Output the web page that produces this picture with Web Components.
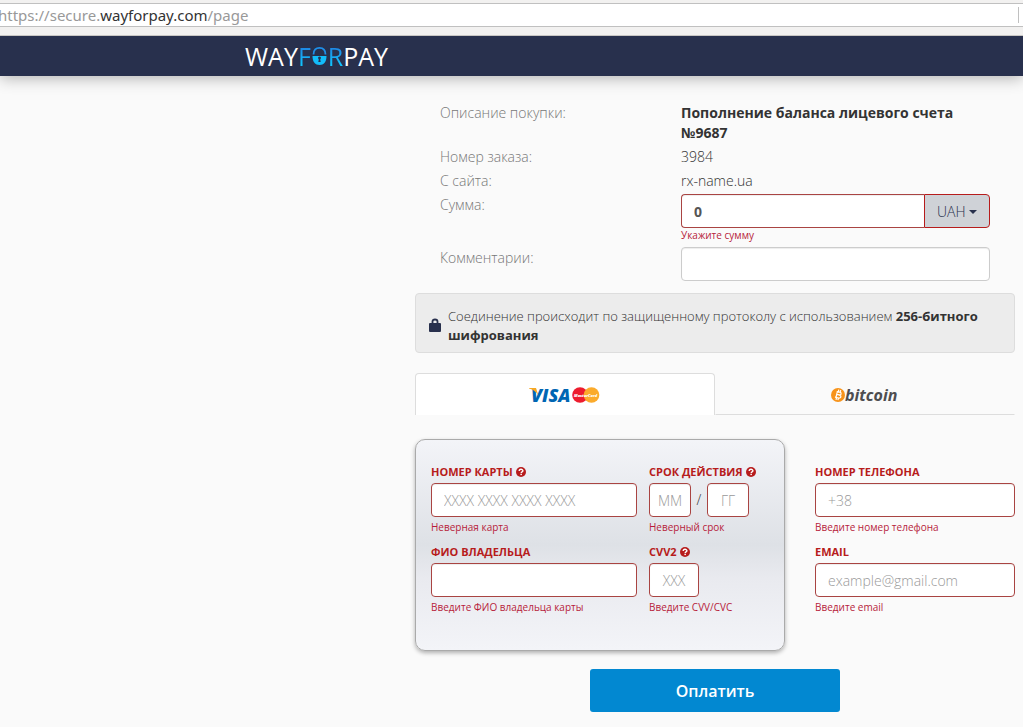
<!DOCTYPE html>
<html lang="ru">
<head>
<meta charset="utf-8">
<title>WayForPay</title>
<style>
  body {
    margin: 0;
    background: #fafafa;
    color: #333;
    font: 300 14px/20px "Open Sans", "Noto Sans", sans-serif;
  }
</style>
</head>
<body>
<pay-page></pay-page>

<script>
const define = (name, html, setup) => {
  const template = document.createElement('template');
  template.innerHTML = '<style>*, *::before { box-sizing: border-box; }</style>' + html;
  customElements.define(name, class extends HTMLElement {
    connectedCallback() {
      if (this.shadowRoot) return;
      const root = this.attachShadow({ mode: 'open' });
      root.append(template.content.cloneNode(true));
      if (setup) setup(this, root);
    }
  });
};

const inputCss = `
  input {
    display: block; width: 100%; height: 34px; margin: 0; padding: 6px 12px;
    border: 1px solid var(--line, #a94442); border-radius: 4px; background: #fff;
    font: inherit; font-size: 14px; line-height: 20px; color: #555; outline: none;
    box-shadow: inset 0 1px 1px rgba(0, 0, 0, .075);
  }
  input::placeholder { color: #999; opacity: 1; }`;

const errorCss = `.error { display: block; font-size: 10px; font-weight: 400; color: #b71c3a; }`;

/* Browser address line, scrolled a little to the left */
define('address-bar', `
  <style>
    :host { display: block; position: relative; z-index: 1; padding: 3px 0 8px; background: #f2f1f0; border-bottom: 1px solid #c9c7c4; }
    .line {
      display: flex; align-items: center; height: 24px; overflow: hidden; white-space: pre;
      border: solid #c0c0c0; border-width: 1px 0; background: #fff;
      font: 400 15px/22px "Noto Sans", sans-serif; color: #999;
    }
    span { margin-left: -2px; }
    b { font-weight: 400; color: #333; }
    i { margin: 0 4px 0 auto; width: 1px; height: 16px; background: #c0c0c0; }
  </style>
  <div class="line"><span>https://secure.<b>wayforpay.com</b>/page</span><i></i></div>`);

/* Dark header with the logo */
define('site-header', `
  <style>
    :host {
      display: flex; align-items: center; height: 40px; padding-left: 245px;
      background: #28304d; box-shadow: 0 2px 16px rgba(0, 0, 0, .3);
    }
    a { display: flex; align-items: center; font-size: 25px; font-weight: 400; line-height: 40px; color: #fff; text-decoration: none; }
    .for { background: linear-gradient(#1e88e5 12px, #10c8ff 30px); -webkit-background-clip: text; background-clip: text; color: transparent; }
    svg { display: block; margin: 0 1px; }
  </style>
  <a href="#" aria-label="WayForPay">
    <span>WAY</span><span class="for">F</span>
    <svg width="15" height="20" viewBox="0 0 15 20" aria-hidden="true">
      <path d="M1.500 8.500C1.500 4 4 1.800 7.500 1.800S13.500 4 13.500 8.500" fill="none" stroke="#1e90ea" stroke-width="1.800"/>
      <path d="M.5 10h14c0 6-2.700 9-7 9S.5 16 .5 10z" fill="#12bcfa"/>
      <path d="M6 12a1.500 1.500 0 1 1 3 0l-.8 1.500.5 2.500H6.300l.5-2.500z" fill="#28304d"/>
    </svg>
    <span class="for">R</span><span>PAY</span>
  </a>`);

/* One line of the order: name on the left, slotted value on the right */
define('order-row', `
  <style>
    :host { display: grid; grid-template-columns: 241px 1fr; }
    .name { padding-top: 1px; color: #777; }
    ::slotted(span), ::slotted(strong) { display: block; padding-top: 1px; }
  </style>
  <div class="name"></div><div><slot></slot></div>`,
  (host, root) => { root.querySelector('.name').textContent = host.getAttribute('name'); });

define('amount-field', `
  <style>
    :host { display: block; }
    ${inputCss} ${errorCss}
    .group { display: grid; grid-template-columns: 1fr 66px; }
    input { border-radius: 4px 0 0 4px; border-right: 0; font-weight: 700; }
    .unit { display: grid; align-items: center; }
    .unit > * { grid-area: 1 / 1; }
    select {
      appearance: none; width: 100%; height: 34px; margin: 0; padding: 1px 12px 0;
      border: 1px solid #b71c1c; border-radius: 0 4px 4px 0; background: #cfd2d7;
      font: inherit; color: #28304d;
    }
    svg { justify-self: end; margin: 2px 13px 0 0; pointer-events: none; }
    .error { padding-bottom: 2px; line-height: 14px; }
  </style>
  <div class="group">
    <input type="text" value="0" aria-label="Сумма">
    <div class="unit">
      <select aria-label="Валюта"><option>UAH</option></select>
      <svg width="8" height="4" viewBox="0 0 8 4" aria-hidden="true"><path d="M0 0h8L4 4z" fill="#28304d"/></svg>
    </div>
  </div>
  <span class="error">Укажите сумму</span>`);

define('comment-field', `
  <style>:host { display: block; --line: #ccc; } ${inputCss}</style>
  <input type="text" aria-label="Комментарии">`);

define('secure-note', `
  <style>
    :host {
      display: flex; align-items: center; gap: 7px; padding: 13px 13px 7px;
      border: 1px solid #ddd; border-radius: 4px; background: #ececec;
      font-size: 13px; line-height: 19px;
    }
    svg { flex: none; }
    p { margin: 0; }
  </style>
  <svg width="12" height="16" viewBox="0 0 12 16" aria-hidden="true">
    <path d="M3.500 6V3.500c0-1.300.8-2 2.500-2s2.500.7 2.500 2V6" fill="none" stroke="#28304d" stroke-width="1.800"/>
    <rect y="5" width="12" height="9" rx="1" fill="#28304d"/>
  </svg>
  <p><slot></slot></p>`);

define('pay-tabs', `
  <style>
    :host { display: grid; grid-template-columns: 1fr 1fr; }
    button {
      display: flex; align-items: center; justify-content: center; height: 42px; margin: 0; padding: 0;
      border: 1px solid transparent; border-bottom-color: #ddd; background: none; font: inherit;
    }
    .active { border-color: #ddd; border-bottom: 0; border-radius: 4px 4px 0 0; background: #fff; }
    svg { display: block; font-family: "Open Sans", sans-serif; }
  </style>
  <button type="button" class="active" aria-label="Visa, MasterCard">
    <svg width="72" height="26" viewBox="0 -3 72 26">
      <text x="2" y="17" font-size="18" font-weight="800" font-style="italic" fill="#0066b3">VISA</text>
      <path d="M0 3h7l2.500 8C8 7 4 4.500 0 3.500z" fill="#f7a823"/>
      <circle cx="51" cy="10" r="7.800" fill="#ed1c2e"/>
      <circle cx="62.500" cy="10" r="7.800" fill="#fbab2c"/>
      <text x="45" y="12" font-size="4" font-weight="800" font-style="italic" fill="#fff">MasterCard</text>
    </svg>
  </button>
  <button type="button" aria-label="bitcoin">
    <svg width="70" height="26" viewBox="0 -3 70 26">
      <circle cx="8" cy="11" r="7" fill="#f7931a"/>
      <path transform="translate(0 1)" d="M6.700 6.500l3 .7c2.200.5 1.700 3-.5 2.600l-2.200-.5M9 9.800c2.800.6 2.200 3.700-.4 3.200l-3.600-.8M7.300 6.700l-1.300 5.600M8.800 4.700l-.5 2M10.700 5.200l-.5 2M6.500 12.800l-.5 2M8.400 13.200l-.5 2" fill="none" stroke="#fff" stroke-width="1.200"/>
      <text x="15" y="17" font-size="16" font-weight="700" font-style="italic" fill="#4d4d4f">bitcoin</text>
    </svg>
  </button>`);

const helpIcon = `<svg class="help" width="10" height="10" viewBox="0 0 10 10" role="img" aria-label="Подсказка">
  <circle cx="5" cy="5" r="5" fill="#b71c1c"/>
  <path d="M3.200 4.100C3.200 2.900 4 2.300 5 2.300s1.900.6 1.900 1.500C6.900 5 5.200 4.900 5.200 6" fill="none" stroke="#fff" stroke-width="1.400"/>
  <rect x="4.400" y="6.700" width="1.500" height="1.400" fill="#fff"/></svg>`;

/* Captioned input with its error text; "second" adds a second box after a slash */
define('card-field', `
  <style>
    :host { display: block; }
    ${inputCss} ${errorCss}
    label { display: flex; align-items: center; gap: 3px; height: 16px; margin-bottom: 3px; font-size: 11px; font-weight: 700; line-height: 16px; color: #b71c1c; white-space: nowrap; }
    .boxes { display: flex; align-items: center; }
    .slash { width: 16px; text-align: center; }
    :host([box]) input { flex: none; width: var(--box); padding: 6px 0; text-align: center; }
    .error { line-height: 20px; white-space: nowrap; }
  </style>
  <label for="box"></label>
  <div class="boxes"><input id="box"></div>
  <span class="error"></span>`,
  (host, root) => {
    const get = name => host.getAttribute(name);
    const label = root.querySelector('label');
    const input = root.querySelector('input');
    label.textContent = get('label');
    if (host.hasAttribute('help')) label.insertAdjacentHTML('beforeend', helpIcon);
    input.type = get('type') || 'text';
    input.placeholder = get('hint') || '';
    if (get('box')) host.style.setProperty('--box', get('box'));
    if (get('second')) input.insertAdjacentHTML('afterend',
      `<span class="slash">/</span><input type="text" aria-label="Год" placeholder="${get('second')}">`);
    root.querySelector('.error').textContent = get('error');
  });

define('bank-card', `
  <style>
    :host {
      display: grid; grid-template-columns: 1fr 120px; gap: 7px 12px; padding: 24px 15px 33px;
      border: 1px solid #aaa; border-radius: 10px;
      background: linear-gradient(#f3f4f8, #dee1e6 50%, #e9eaef 66%, #f3f4f8);
      box-shadow: 0 2px 4px rgba(0, 0, 0, .3);
    }
  </style>
  <slot></slot>`);

define('contact-fields', `
  <style>:host { display: grid; align-content: start; gap: 7px; padding-top: 25px; }</style>
  <slot></slot>`);

define('pay-button', `
  <style>
    :host { display: flex; justify-content: center; }
    button {
      width: 250px; height: 43px; margin: 0; padding: 0; border: 0; border-radius: 3px;
      background: #0288d1; color: #fff; font: inherit; font-size: 16px; font-weight: 600;
    }
  </style>
  <button type="submit"><slot></slot></button>`);

define('pay-page', `
  <style>
    :host { display: block; }
    main { max-width: 600px; margin: 0 8px 0 auto; padding: 26px 0 15px; }
    .order { display: grid; gap: 3px; padding: 0 25px; }
    secure-note { margin-top: 12px; }
    pay-tabs { margin-top: 20px; }
    .form { display: grid; grid-template-columns: 1fr 200px; gap: 30px; margin-top: 24px; }
    pay-button { margin-top: 18px; }
    strong { font-weight: 700; }
  </style>
  <address-bar></address-bar>
  <site-header></site-header>
  <main>
    <section class="order">
      <order-row name="Описание покупки:"><strong>Пополнение баланса лицевого счета №9687</strong></order-row>
      <order-row name="Номер заказа:"><span>3984</span></order-row>
      <order-row name="С сайта:"><span>rx-name.ua</span></order-row>
      <order-row name="Сумма:"><amount-field></amount-field></order-row>
      <order-row name="Комментарии:"><comment-field></comment-field></order-row>
    </section>
    <secure-note>Соединение происходит по защищенному протоколу с использованием <strong>256-битного шифрования</strong></secure-note>
    <pay-tabs></pay-tabs>
    <section class="form">
      <bank-card>
        <card-field label="НОМЕР КАРТЫ" help hint="XXXX XXXX XXXX XXXX" error="Неверная карта"></card-field>
        <card-field label="СРОК ДЕЙСТВИЯ" help box="42px" hint="ММ" second="ГГ" error="Неверный срок"></card-field>
        <card-field label="ФИО ВЛАДЕЛЬЦА" error="Введите ФИО владельца карты"></card-field>
        <card-field label="CVV2" help box="50px" hint="XXX" error="Введите CVV/CVC"></card-field>
      </bank-card>
      <contact-fields>
        <card-field label="НОМЕР ТЕЛЕФОНА" type="tel" hint="+38" error="Введите номер телефона"></card-field>
        <card-field label="EMAIL" type="email" hint="example@gmail.com" error="Введите email"></card-field>
      </contact-fields>
    </section>
    <pay-button>Оплатить</pay-button>
  </main>`);
</script>
</body>
</html>
